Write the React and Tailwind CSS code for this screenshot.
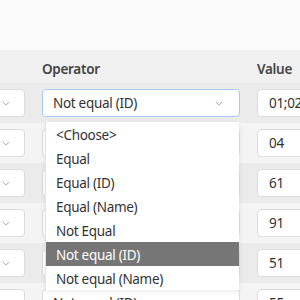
import React from "react";

const rows = [
  { op: "Not equal (ID)", value: "01;02", bg: "bg-[#ebebeb]", focused: true },
  { op: "", value: "04", bg: "bg-[#f4f4f4]" },
  { op: "", value: "61", bg: "bg-[#ebebeb]" },
  { op: "", value: "91", bg: "bg-[#f4f4f4]" },
  { op: "", value: "51", bg: "bg-[#ebebeb]" },
  { op: "Not equal (ID)", value: "55", bg: "bg-[#f4f4f4]" }
];

const options = [
  "<Choose>",
  "Equal",
  "Equal (ID)",
  "Equal (Name)",
  "Not Equal",
  "Not equal (ID)",
  "Not equal (Name)"
];

const Chevron = ({ className }) => (
  <svg viewBox="0 0 10 6" className={className} fill="none" stroke="currentColor" strokeWidth="1">
    <path d="M1 1l4 4 4-4" />
  </svg>
);

const App = () => {
  return (
    <div className="relative w-[300px] h-[300px] overflow-hidden bg-[#fafafa] text-[13.5px] tracking-[-0.3px] text-[#333] font-['Noto_Sans',sans-serif]">
      <div className="h-[50px]" />

      {/* Header */}
      <div className="h-[33px] bg-[#f0f0f0] flex items-center pt-[6px] ml-[-60px] gap-[17px]">
        <div className="w-[85px] shrink-0" />
        <div className="w-[198px] shrink-0 font-semibold text-[#444]">Operator</div>
        <div className="w-[100px] shrink-0 font-semibold text-[#444]">Value</div>
      </div>

      {/* Rows */}
      {rows.map((row, i) => (
        <div key={i} className={`h-[40px] ${row.bg} flex items-center ml-[-60px] gap-[17px]`}>
          <div className="w-[85px] h-[28px] shrink-0 bg-white border border-[#dcdcdc] rounded-[4px] flex items-center justify-end pr-[14px] text-[#999]">
            <Chevron className="w-[8px] h-[5px]" />
          </div>
          <div
            className={`w-[198px] h-[28px] shrink-0 bg-white rounded-[4px] flex items-center justify-between pl-[10px] pr-[16px] pt-[1px] border ${
              row.focused ? "border-[#a9c8f3]" : "border-[#dcdcdc]"
            }`}
          >
            <span>{row.op}</span>
            <Chevron className="w-[8px] h-[5px] text-[#999]" />
          </div>
          <div className="w-[100px] h-[28px] shrink-0 bg-white border border-[#dcdcdc] rounded-[4px] flex items-center pl-[11px] pt-[1px]">
            {row.value}
          </div>
        </div>
      ))}

      {/* Open dropdown */}
      <div className="absolute left-[45px] top-[122px] w-[194px] bg-white border-l border-[#e3e3e3] shadow-[0_2px_6px_rgba(0,0,0,0.08)]">
        {options.map((opt) => (
          <div
            key={opt}
            className={`h-[24px] flex items-center pl-[10px] pt-[2px] ${
              opt === "Not equal (ID)" ? "bg-[#767676] text-white" : ""
            }`}
          >
            {opt}
          </div>
        ))}
      </div>
    </div>
  );
};

export default App;
